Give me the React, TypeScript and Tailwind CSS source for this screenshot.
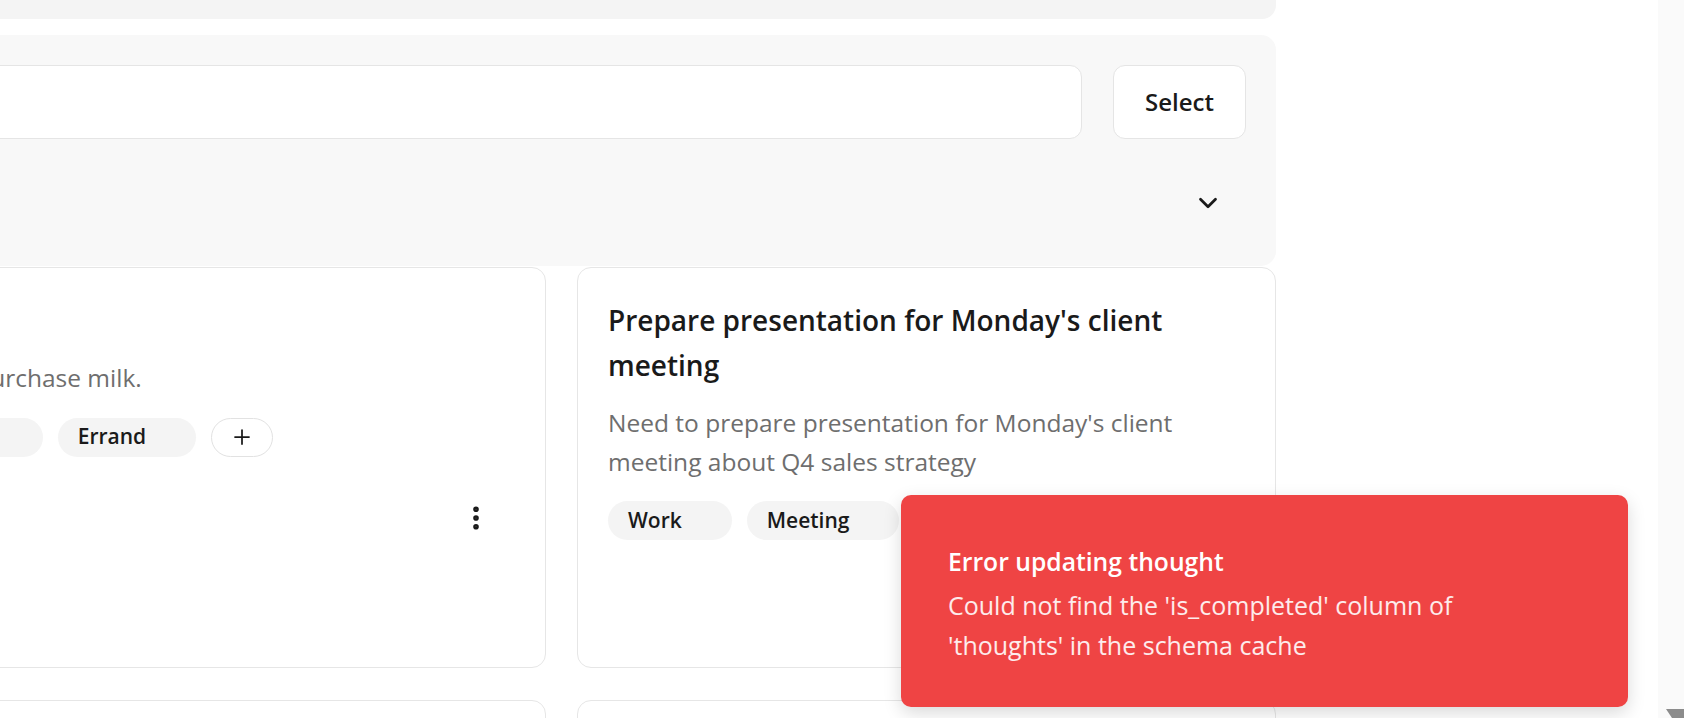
import { ChevronDown, EllipsisVertical, Plus } from "lucide-react";

type Thought = {
  title: string;
  body: string;
  tags: string[];
};

const thoughts: Thought[] = [
  { title: "Buy milk", body: "Need to purchase milk.", tags: ["Shopping", "Errand"] },
  {
    title: "Prepare presentation for Monday's client meeting",
    body: "Need to prepare presentation for Monday's client meeting about Q4 sales strategy",
    tags: ["Work", "Meeting"],
  },
  { title: "Call the dentist", body: "Book a check-up.", tags: ["Health"] },
  { title: "Read a book", body: "Finish the last chapter.", tags: ["Personal"] },
];

function Tag({ label }: { label: string }) {
  return (
    <span className="flex h-[39px] items-center rounded-full bg-[#f4f4f4] pl-[20px] pr-[50px] text-[21px] font-semibold text-[#1a1a1a]">
      {label}
    </span>
  );
}

function ThoughtCard({ thought }: { thought: Thought }) {
  return (
    <div className="flex h-[401px] flex-col rounded-[14px] border border-[#e6e6e6] bg-white p-[30px]">
      <h3 className="text-[28px] font-semibold leading-[45px] text-[#1a1a1a]">{thought.title}</h3>
      <p className="mt-[16px] text-[24.5px] leading-[38.5px] text-[#6e6e6e]">{thought.body}</p>
      <div className="mt-[20px] flex items-center gap-[15px]">
        {thought.tags.map((t) => (
          <Tag key={t} label={t} />
        ))}
        <button className="flex h-[39px] w-[62px] items-center justify-center rounded-full border border-[#e2e2e2] bg-white text-[#1a1a1a]">
          <Plus size={24} strokeWidth={1.75} />
        </button>
      </div>
      <div className="mt-[46px] flex justify-end pr-[24px]">
        <EllipsisVertical size={30} strokeWidth={2.5} className="text-[#1a1a1a]" />
      </div>
    </div>
  );
}

export default function App() {
  return (
    <div className="relative flex h-[718px] w-[1684px] overflow-hidden bg-white font-['Open_Sans',sans-serif]">
      <div className="flex-1 overflow-hidden">
        <div className="-ml-[153px] w-[1429px]">
          <div className="h-[19px] rounded-b-[14px] bg-[#f4f4f4]" />

          <div className="mt-[16px] h-[231px] rounded-[15px] bg-[#f8f8f8] p-[30px]">
            <div className="flex gap-[31px]">
              <input
                className="h-[74px] flex-1 rounded-[12px] border border-[#e5e5e5] bg-white px-[20px] text-[22px] outline-none"
                placeholder="Search"
              />
              <button className="h-[74px] w-[133px] rounded-[12px] border border-[#e5e5e5] bg-white text-[24px] font-semibold text-[#1a1a1a]">
                Select
              </button>
            </div>
            <div className="mt-[30px] flex h-[67px] items-center justify-end pr-[23px]">
              <ChevronDown size={30} strokeWidth={2.2} className="text-[#1a1a1a]" />
            </div>
          </div>

          <div className="mt-[1px] grid grid-cols-2 gap-x-[31px] gap-y-[32px]">
            {thoughts.map((t) => (
              <ThoughtCard key={t.title} thought={t} />
            ))}
          </div>
        </div>
      </div>

      <div className="flex w-[26px] flex-col justify-end bg-[#fafafa]">
        <svg width="26" height="9" viewBox="0 0 26 9" className="block">
          <path d="M8 0 H26 V9 H14 Z" fill="#8c8c8c" />
        </svg>
      </div>

      <div className="absolute bottom-[11px] right-[56px] flex h-[212px] w-[727px] items-center rounded-[10px] bg-[#ef4444] pl-[47px] pr-[110px] pt-[6px] shadow-[0_6px_18px_rgba(0,0,0,0.15)]">
        <div className="flex flex-col gap-[5px] text-white">
          <div className="text-[24.7px] font-semibold leading-[37px]">Error updating thought</div>
          <div className="text-[25px] leading-[40px] text-white/90">
            Could not find the 'is_completed' column of 'thoughts' in the schema cache
          </div>
        </div>
      </div>
    </div>
  );
}
